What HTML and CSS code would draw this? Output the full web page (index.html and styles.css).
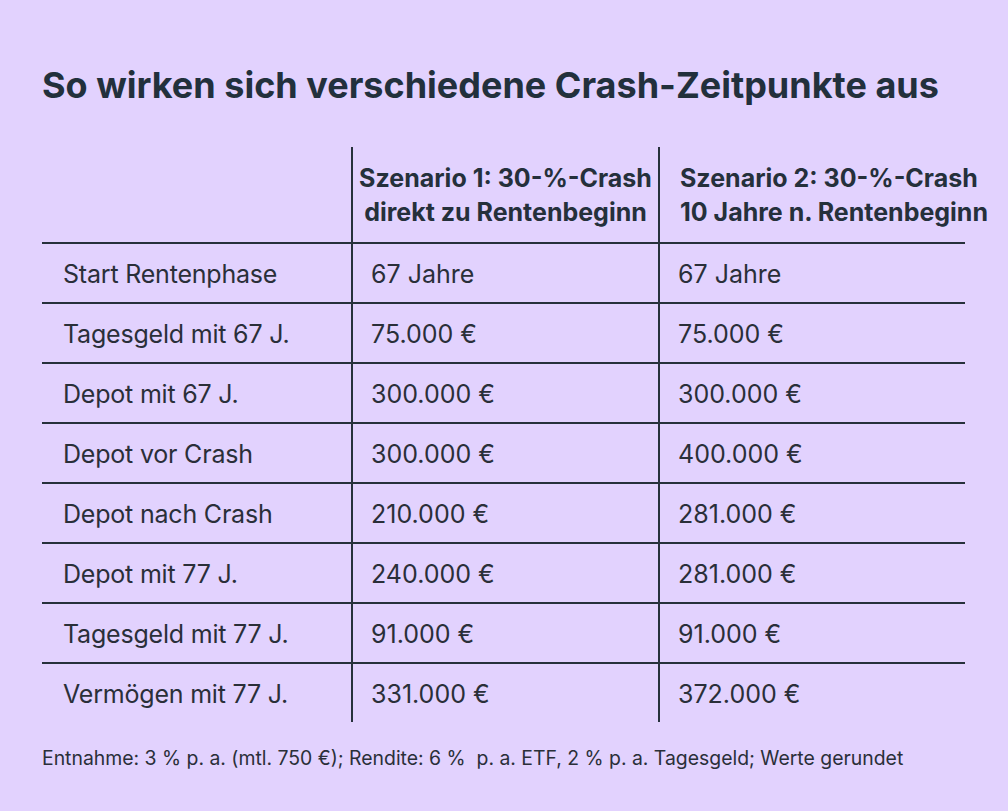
FILE: index.html
```html
<!DOCTYPE html>
<html lang="de">
<head>
<meta charset="utf-8">
<link rel="stylesheet" href="styles.css">
</head>
<body>
<main class="page">
  <h1 class="title">So wirken sich verschiedene Crash-Zeitpunkte aus</h1>
  <div class="table">
    <div class="cell head"></div>
    <div class="cell head head-c1 vl">Szenario 1: 30-%-Crash<br>direkt zu Rentenbeginn</div>
    <div class="cell head head-c2 vl">Szenario 2: 30-%-Crash<br>10 Jahre n. Rentenbeginn</div>

    <div class="cell lbl hl">Start Rentenphase</div>
    <div class="cell val vl hl">67 Jahre</div>
    <div class="cell val vl hl">67 Jahre</div>

    <div class="cell lbl hl">Tagesgeld mit 67 J.</div>
    <div class="cell val vl hl">75.000 €</div>
    <div class="cell val vl hl">75.000 €</div>

    <div class="cell lbl hl">Depot mit 67 J.</div>
    <div class="cell val vl hl">300.000 €</div>
    <div class="cell val vl hl">300.000 €</div>

    <div class="cell lbl hl">Depot vor Crash</div>
    <div class="cell val vl hl">300.000 €</div>
    <div class="cell val vl hl">400.000 €</div>

    <div class="cell lbl hl">Depot nach Crash</div>
    <div class="cell val vl hl">210.000 €</div>
    <div class="cell val vl hl">281.000 €</div>

    <div class="cell lbl hl">Depot mit 77 J.</div>
    <div class="cell val vl hl">240.000 €</div>
    <div class="cell val vl hl">281.000 €</div>

    <div class="cell lbl hl">Tagesgeld mit 77 J.</div>
    <div class="cell val vl hl">91.000 €</div>
    <div class="cell val vl hl">91.000 €</div>

    <div class="cell lbl">Vermögen mit 77 J.</div>
    <div class="cell val vl">331.000 €</div>
    <div class="cell val vl">372.000 €</div>
  </div>
  <p class="note">Entnahme: 3 % p. a. (mtl. 750 €); Rendite: 6 %&nbsp; p. a. ETF, 2 % p. a. Tagesgeld; Werte gerundet</p>
</main>
</body>
</html>
```

FILE: styles.css
```css
html, body {
  margin: 0;
  padding: 0;
  background: #e2d2fe;
}
body {
  font-family: Inter, Roboto, "Liberation Sans", sans-serif;
  color: #2a2f39;
  width: 1008px;
  height: 811px;
  overflow: hidden;
}
.page {
  padding: 63px 0 0 42px;
}
.title {
  margin: 0;
  font-size: 36px;
  font-weight: 700;
  line-height: 44px;
  color: #22303c;
}
.table {
  margin-top: 40px;
  display: grid;
  grid-template-columns: 309px 307px 307px;
  grid-template-rows: 97px repeat(7, 60px) 58px;
}
.cell {
  display: flex;
  align-items: center;
  box-sizing: border-box;
  font-size: 25px;
  line-height: 30px;
  white-space: nowrap;
}
.head {
  border-bottom: 2px solid #27313c;
  font-weight: 700;
  font-size: 25px;
  line-height: 34px;
  color: #25303b;
}
.head-c1 {
  justify-content: center;
  text-align: center;
}
.head-c2 {
  padding-left: 20px;
}
.vl {
  border-left: 2px solid #27313c;
}
.hl {
  border-bottom: 2px solid #27313c;
}
.lbl {
  padding-left: 21px;
  padding-top: 1px;
  letter-spacing: -0.2px;
}
.val {
  padding-left: 18px;
  padding-top: 1px;
}
.note {
  margin: 24px 0 0;
  font-size: 19.4px;
  line-height: 24px;
  color: #2a2f39;
}
```
